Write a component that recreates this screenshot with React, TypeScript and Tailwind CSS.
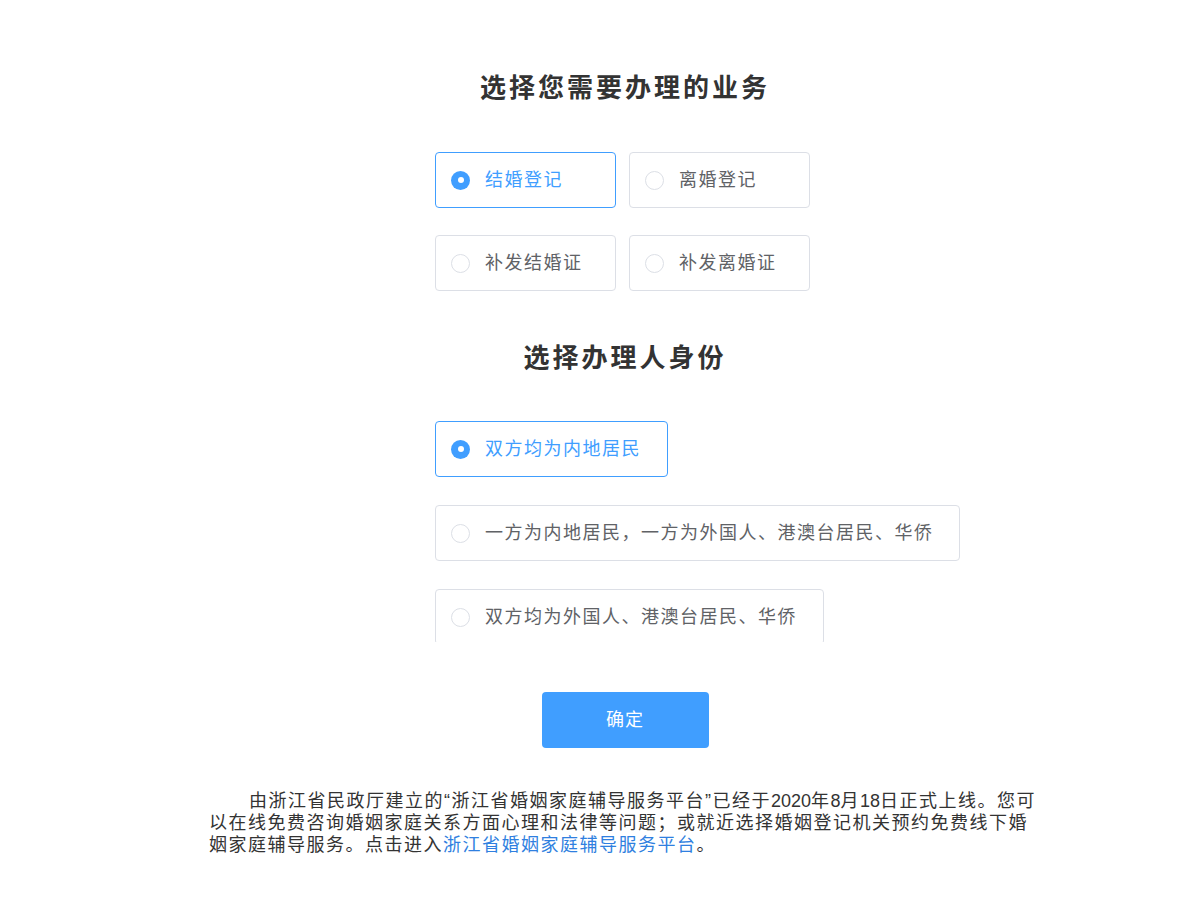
import React, { useState } from "react";

const font = "font-['Liberation_Sans','Noto_Sans_CJK_SC',sans-serif]";

const businessOptions = ["结婚登记", "离婚登记", "补发结婚证", "补发离婚证"];
const identityOptions = [
  { label: "双方均为内地居民", width: "w-[233px]" },
  { label: "一方为内地居民，一方为外国人、港澳台居民、华侨", width: "w-[525px]" },
  { label: "双方均为外国人、港澳台居民、华侨", width: "w-[389px]" },
];

const Radio = ({ checked }: { checked: boolean }) =>
  checked ? (
    <span className="flex h-[19px] w-[19px] shrink-0 items-center justify-center rounded-full bg-[#409eff]">
      <span className="h-[6px] w-[6px] rounded-full bg-white" />
    </span>
  ) : (
    <span className="h-[19px] w-[19px] shrink-0 rounded-full border border-[#dcdfe6] bg-white" />
  );

const OptionBox = ({
  label,
  checked,
  width,
  onClick,
}: {
  label: string;
  checked: boolean;
  width: string;
  onClick: () => void;
}) => (
  <div
    onClick={onClick}
    className={`flex h-[56px] shrink-0 cursor-pointer items-center gap-[15px] whitespace-nowrap rounded-[4px] border pl-[15px] text-[18px] tracking-[1.5px] ${width} ${
      checked ? "border-[#409eff] text-[#409eff]" : "border-[#dcdfe6] text-[#606266]"
    }`}
  >
    <Radio checked={checked} />
    <span>{label}</span>
  </div>
);

export default function App() {
  const [business, setBusiness] = useState(0);
  const [identity, setIdentity] = useState(0);

  return (
    <div className={`min-h-[903px] bg-white pl-[50px] ${font}`}>
      <div className="mx-auto flex w-[832px] flex-col items-center pt-[73px]">
        <h2 className="text-[26px] font-bold leading-[30px] tracking-[3px] text-[#333]">
          选择您需要办理的业务
        </h2>

        <div className="mt-[49px] grid w-[380px] grid-cols-[180px_180px] gap-x-[14px] gap-y-[27px]">
          {businessOptions.map((b, i) => (
            <OptionBox
              key={b}
              label={b}
              width="w-[181px]"
              checked={business === i}
              onClick={() => setBusiness(i)}
            />
          ))}
        </div>

        <h2 className="mt-[52px] text-[26px] font-bold leading-[30px] tracking-[3px] text-[#333]">
          选择办理人身份
        </h2>

        {/* the last option is cut off at the bottom, as in the original page */}
        <div className="mt-[48px] flex h-[221px] w-[380px] flex-col gap-[28px] overflow-x-visible overflow-y-clip">
          {identityOptions.map((o, i) => (
            <OptionBox
              key={o.label}
              label={o.label}
              width={o.width}
              checked={identity === i}
              onClick={() => setIdentity(i)}
            />
          ))}
        </div>

        <button className="mt-[50px] h-[56px] w-[167px] rounded-[4px] bg-[#409eff] text-[18px] tracking-[1px] text-white">
          确定
        </button>

        <p className="mt-[42px] w-[832px] indent-[40px] text-[18px] leading-[22px] tracking-[1.5px] text-[#333]">
          由浙江省民政厅建立的“浙江省婚姻家庭辅导服务平台”已经于<span className="tracking-normal">2020</span>年
          <span className="tracking-normal">8</span>月<span className="tracking-normal">18</span>
          日正式上线。您可以在线免费咨询婚姻家庭关系方面心理和法律等问题；或就近选择婚姻登记机关预约免费线下婚姻家庭辅导服务。点击进入
          <a className="text-[#2f7fe0]">浙江省婚姻家庭辅导服务平台</a>。
        </p>
      </div>
    </div>
  );
}
